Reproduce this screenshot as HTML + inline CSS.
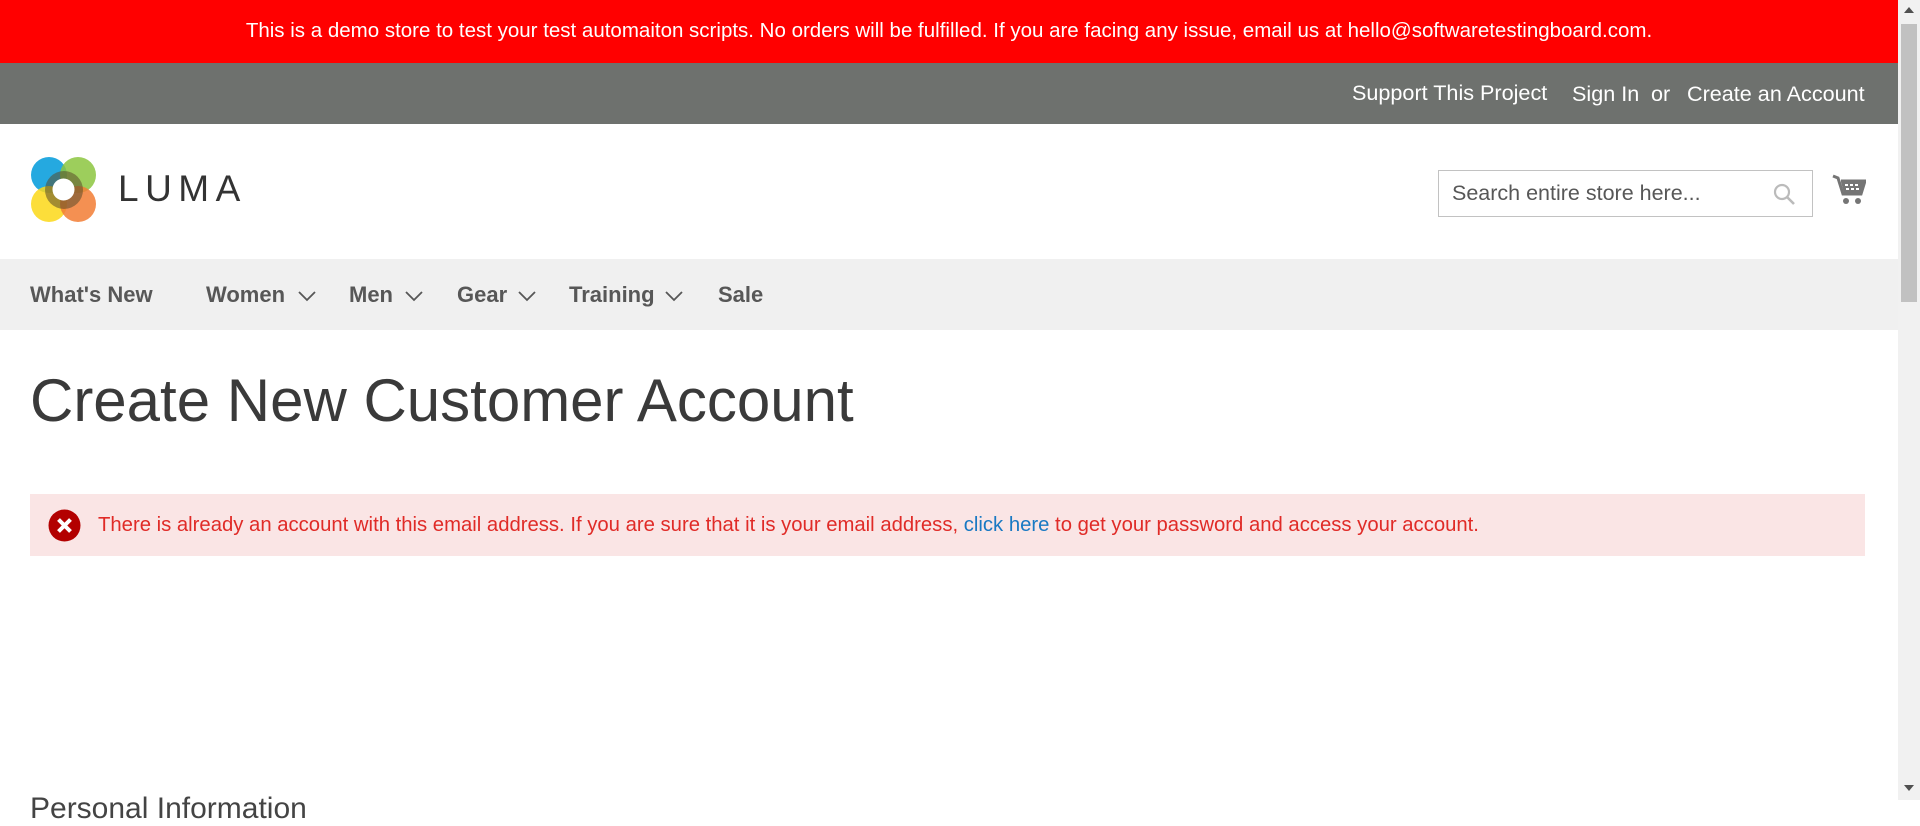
<!DOCTYPE html>
<html><head><meta charset="utf-8"><style>
*{margin:0;padding:0;box-sizing:border-box}
body{width:1920px;height:800px;overflow:hidden;background:#fff;font-family:"Liberation Sans",sans-serif;position:relative}
.abs{position:absolute;white-space:nowrap}
.demo{position:absolute;left:0;top:0;width:1898px;height:63px;background:#ff0000;color:#fff;font-size:20.5px;text-align:center;line-height:62px}
.top{position:absolute;left:0;top:63px;width:1898px;height:61px;background:#6e716e;color:#fff;font-size:21.6px}
.nav{position:absolute;left:0;top:259px;width:1898px;height:71px;background:#f0f0f0}
.nav span{position:absolute;top:23px;font-size:22px;font-weight:bold;color:#575757}
.chev{position:absolute;top:31px}
.sb{position:absolute;left:1898px;top:0;width:22px;height:800px;background:#f1f1f1}
</style></head><body>
<div class="demo">This is a demo store to test your test automaiton scripts. No orders will be fulfilled. If you are facing any issue, email us at hello@softwaretestingboard.com.</div>
<div class="top">
<span class="abs" style="left:1352px;top:17px">Support This Project</span>
<span class="abs" style="left:1572px;top:18px">Sign In</span>
<span class="abs" style="left:1651px;top:18px">or</span>
<span class="abs" style="left:1687px;top:18px">Create an Account</span>
</div>
<svg class="abs" style="left:30px;top:156px" width="68" height="68" viewBox="0 0 68 68">
<circle cx="19" cy="19" r="18" fill="#25a9e0"/>
<circle cx="48" cy="19" r="18" fill="#8cc540" opacity=".85"/>
<circle cx="19" cy="48" r="18" fill="#fcd817" opacity=".85"/>
<circle cx="48" cy="48" r="18" fill="#f27c34" opacity=".85"/>
<circle cx="34" cy="34" r="19" fill="#5a4a2a" opacity=".55"/>
<circle cx="33.5" cy="33.5" r="11" fill="#fff"/>
</svg>
<span class="abs" style="left:118px;top:168px;font-size:37px;letter-spacing:6.5px;color:#333">LUMA</span>
<div class="abs" style="left:1438px;top:170px;width:375px;height:47px;border:1px solid #c2c2c2;background:#fff">
<span class="abs" style="left:13px;top:10px;font-size:21.5px;color:#575757">Search entire store here...</span>
<svg class="abs" style="left:333px;top:11px" width="24" height="24" viewBox="0 0 24 24"><circle cx="10" cy="10" r="7" fill="none" stroke="#bbb" stroke-width="2.2"/><path d="M15 15l7 7" stroke="#bbb" stroke-width="2.6"/></svg>
</div>
<svg class="abs" style="left:1832px;top:174px" width="34" height="32" viewBox="0 0 34 32"><path d="M1 2l5 2 5 16h18l4-13H9" fill="none" stroke="#757575" stroke-width="3"/><path d="M9 8h23l-3 11H12z" fill="#757575"/><g fill="#fff"><rect x="13" y="10" width="3" height="2"/><rect x="18" y="10" width="3" height="2"/><rect x="23" y="10" width="3" height="2"/><rect x="14" y="14" width="3" height="2"/><rect x="19" y="14" width="3" height="2"/><rect x="24" y="14" width="3" height="2"/></g><circle cx="14" cy="27" r="3" fill="#757575"/><circle cx="26" cy="27" r="3" fill="#757575"/></svg>
<div class="nav">
<span style="left:30px">What's New</span>
<span style="left:206px">Women</span>
<span style="left:349px">Men</span>
<span style="left:457px">Gear</span>
<span style="left:569px">Training</span>
<span style="left:718px">Sale</span>
<svg class="chev" style="left:298px" width="18" height="12" viewBox="0 0 18 12"><path d="M1 2l8 8 8-8" fill="none" stroke="#575757" stroke-width="1.8"/></svg>
<svg class="chev" style="left:405px" width="18" height="12" viewBox="0 0 18 12"><path d="M1 2l8 8 8-8" fill="none" stroke="#575757" stroke-width="1.8"/></svg>
<svg class="chev" style="left:518px" width="18" height="12" viewBox="0 0 18 12"><path d="M1 2l8 8 8-8" fill="none" stroke="#575757" stroke-width="1.8"/></svg>
<svg class="chev" style="left:665px" width="18" height="12" viewBox="0 0 18 12"><path d="M1 2l8 8 8-8" fill="none" stroke="#575757" stroke-width="1.8"/></svg>
</div>
<span class="abs" style="left:30px;top:366px;font-size:60px;color:#3a3a3a;font-weight:300">Create New Customer Account</span>
<div class="abs" style="left:30px;top:494px;width:1835px;height:62px;background:#fae5e5">
<svg class="abs" style="left:18px;top:15px" width="33" height="33" viewBox="0 0 33 33"><circle cx="16.5" cy="16.5" r="16" fill="#b30000"/><path d="M10.5 10.5l12 12M22.5 10.5l-12 12" stroke="#fff" stroke-width="4"/></svg>
<span class="abs" style="left:68px;top:20px;font-size:20.3px;color:#e02b27">There is already an account with this email address. If you are sure that it is your email address, <span style="color:#1979c3">click here</span> to get your password and access your account.</span>
</div>
<span class="abs" style="left:30px;top:792px;font-size:30px;color:#444">Personal Information</span>
<div class="sb"><div class="abs" style="left:3px;top:24px;width:16px;height:278px;background:#c1c1c1"></div>
<svg class="abs" style="left:6px;top:6px" width="10" height="8"><path d="M0 7l5-6 5 6z" fill="#505050"/></svg>
<svg class="abs" style="left:6px;top:784px" width="10" height="8"><path d="M0 1l5 6 5-6z" fill="#505050"/></svg></div>
</body></html>
